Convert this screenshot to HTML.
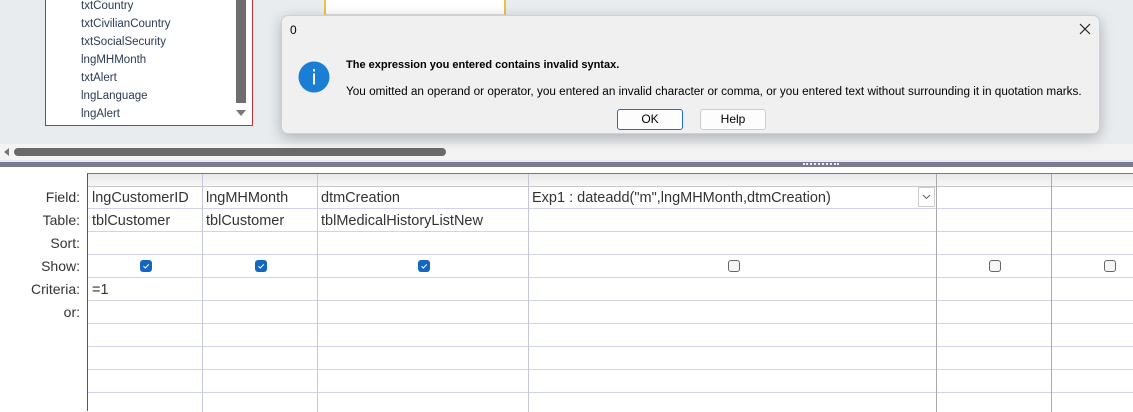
<!DOCTYPE html>
<html><head><style>
*{margin:0;padding:0;box-sizing:border-box}
body{width:1133px;height:411px;overflow:hidden;position:relative;background:#fff;font-family:"Liberation Sans",sans-serif}
.top{position:absolute;left:0;top:0;width:1133px;height:162px;background:#e9ecef}
.fl{position:absolute;left:45px;top:-2px;width:208px;height:128px;background:#fff;border:1px solid #c0303a}
.fl .t{position:absolute;left:35px;font-size:11.5px;color:#2a3a55}
.fl .sb{position:absolute;left:190px;top:0;width:10px;height:104px;background:#6e6e6e}
.yb{position:absolute;left:324px;top:-2px;width:182px;height:17px;background:#fff;border-left:2px solid #e8c24a;border-right:2px solid #e8c24a;border-bottom:1px solid #ddd}
.hs{position:absolute;left:0;top:144px;width:1133px;height:16px;background:#f3f3f3}
.thumb{position:absolute;left:14px;top:148px;width:432px;height:8px;background:#6a6a6a;border-radius:4px}
.split{position:absolute;left:0;top:162px;width:1133px;height:5px;background:#7b7996}
.dlg{position:absolute;left:281px;top:15px;width:819px;height:119px;background:#f0f0f0;border:1px solid #d0d0d0;border-radius:7px;box-shadow:0 4px 14px rgba(0,0,0,.25)}
.btn{position:absolute;top:93px;height:21px;width:66px;background:#fdfdfd;border:1px solid #ccc;border-radius:3px;font-size:12px;text-align:center;line-height:19px}
.grid{position:absolute;left:87px;top:173px;width:1046px;height:238px;border-left:1px solid #555;border-top:1px solid #777}
.hdr{position:absolute;left:0;top:0;width:1046px;height:12px;background:linear-gradient(#e8e8e8,#f7f7f7)}
.vl{position:absolute;top:0;width:1px;height:238px;background:#c4c8d8}
.hl{position:absolute;left:0;width:1046px;height:1px;background:#d0d4e6}
.lab{position:absolute;right:1053px;font-size:14px;color:#333;text-align:right;width:80px}
.c{position:absolute;font-size:14.5px;color:#333}
.cb{position:absolute;width:12px;height:12px;border-radius:3px}
.on{background:#1467c0}
.off{border:1px solid #666;background:#f6f6f6}
</style></head><body>
<div class="top"></div>
<div class="fl">
<div class="t" style="top:1px">txtCountry</div>
<div class="t" style="top:19px">txtCivilianCountry</div>
<div class="t" style="top:37px">txtSocialSecurity</div>
<div class="t" style="top:55px">lngMHMonth</div>
<div class="t" style="top:73px">txtAlert</div>
<div class="t" style="top:91px">lngLanguage</div>
<div class="t" style="top:109px">lngAlert</div>
<div class="sb"></div>
<svg style="position:absolute;left:189px;top:110px" width="12" height="8"><path d="M1 1h10L6 7z" fill="#777"/></svg>
</div>
<div class="yb"></div>
<div class="hs"></div>
<svg style="position:absolute;left:2px;top:147px" width="8" height="10"><path d="M7 1v8L2 5z" fill="#777"/></svg>
<div class="thumb"></div>
<div class="split"></div>
<div style="position:absolute;left:803px;top:163px;width:36px;height:2px;border-top:2px dotted #eee"></div>

<div class="dlg">
<div style="position:absolute;left:8px;top:7px;font-size:12px">0</div>
<svg style="position:absolute;left:797px;top:7px" width="12" height="12"><path d="M1 1L11 11M11 1L1 11" stroke="#222" stroke-width="1.2"/></svg>
<svg style="position:absolute;left:16px;top:45px" width="32" height="32"><circle cx="16" cy="16" r="15.5" fill="#1a7fd4"/><rect x="15" y="8" width="2" height="2.5" fill="#fff"/><rect x="15" y="12.5" width="2" height="11" fill="#fff"/></svg>
<div style="position:absolute;left:64px;top:43px;font-size:11px;font-weight:bold;color:#000">The expression you entered contains invalid syntax.</div>
<div style="position:absolute;left:64px;top:69px;font-size:11.75px;color:#000;white-space:nowrap">You omitted an operand or operator, you entered an invalid character or comma, or you entered text without surrounding it in quotation marks.</div>
<div class="btn" style="left:335px;border:1px solid #1a6fd0">OK</div>
<div class="btn" style="left:418px">Help</div>
</div>

<div class="lab" style="top:189px">Field:</div>
<div class="lab" style="top:212px">Table:</div>
<div class="lab" style="top:235px">Sort:</div>
<div class="lab" style="top:258px">Show:</div>
<div class="lab" style="top:281px">Criteria:</div>
<div class="lab" style="top:304px">or:</div>

<div class="grid">
<div class="hdr"></div>
<div class="hl" style="top:12px;background:#c8c8c8"></div>
<div class="hl" style="top:34px"></div>
<div class="hl" style="top:57px"></div>
<div class="hl" style="top:80px"></div>
<div class="hl" style="top:103px"></div>
<div class="hl" style="top:126px"></div>
<div class="hl" style="top:149px"></div>
<div class="hl" style="top:172px"></div>
<div class="hl" style="top:195px"></div>
<div class="hl" style="top:218px"></div>
<div class="vl" style="left:114px"></div>
<div class="vl" style="left:229px"></div>
<div class="vl" style="left:440px"></div>
<div class="vl" style="left:848px;background:#aaa"></div>
<div class="vl" style="left:963px;background:#aaa"></div>
<div class="c" style="left:4px;top:16px">lngCustomerID</div>
<div class="c" style="left:118px;top:16px">lngMHMonth</div>
<div class="c" style="left:233px;top:16px">dtmCreation</div>
<div class="c" style="left:444px;top:16px">Exp1 : dateadd("m",lngMHMonth,dtmCreation)</div>
<div style="position:absolute;left:830px;top:13px;width:17px;height:20px;border:1px solid #ccc;background:#fff"></div>
<svg style="position:absolute;left:834px;top:20px" width="9" height="6"><path d="M1 1l3.5 3.5L8 1" stroke="#666" fill="none"/></svg>
<div class="c" style="left:4px;top:39px">tblCustomer</div>
<div class="c" style="left:118px;top:39px">tblCustomer</div>
<div class="c" style="left:233px;top:39px">tblMedicalHistoryListNew</div>
<div class="c" style="left:4px;top:108px">=1</div>
<svg class="cb on" style="left:52px;top:86px" width="12" height="12"><path d="M3.5 6.2l1.8 1.8 3.5-3.6" stroke="#fff" fill="none"/></svg>
<svg class="cb on" style="left:167px;top:86px" width="12" height="12"><path d="M3.5 6.2l1.8 1.8 3.5-3.6" stroke="#fff" fill="none"/></svg>
<svg class="cb on" style="left:330px;top:86px" width="12" height="12"><path d="M3.5 6.2l1.8 1.8 3.5-3.6" stroke="#fff" fill="none"/></svg>
<div class="cb off" style="left:640px;top:86px"></div>
<div class="cb off" style="left:901px;top:86px"></div>
<div class="cb off" style="left:1016px;top:86px"></div>
</div>
</body></html>
